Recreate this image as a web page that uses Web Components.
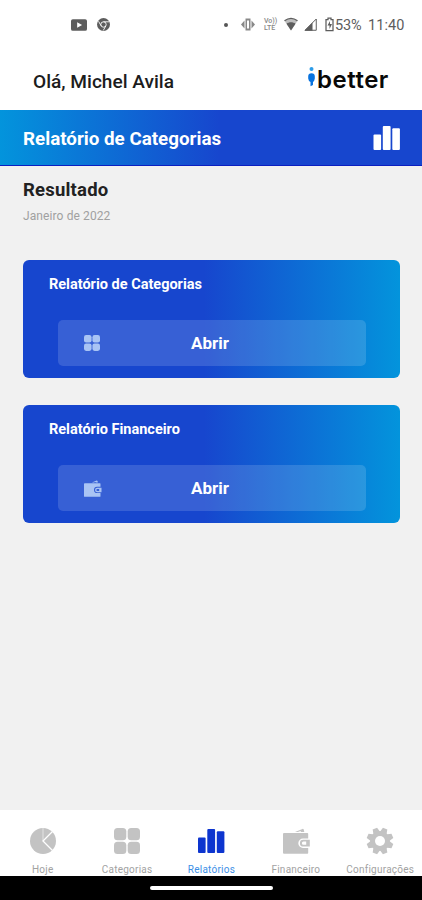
<!DOCTYPE html>
<html lang="pt-BR">
<head>
<meta charset="utf-8">
<title>ibetter</title>
<style>
  body {
    margin: 0;
    font-family: Roboto, "Liberation Sans", sans-serif;
    background: #f1f1f1;
  }
</style>
</head>
<body>
<better-app></better-app>

<script>
const ICONS = {
  bars: `<rect x="0" y="9.500" width="7.600" height="15.500" rx="1"/><rect x="9.300" y="1" width="7.800" height="24" rx="1"/><rect x="18.800" y="3.200" width="7.600" height="21.800" rx="1"/>`,
  grid: `<rect x="0" y="0" width="12.300" height="12.300" rx="3.500"/><rect x="13.700" y="0" width="12.300" height="12.300" rx="3.500"/><rect x="0" y="13.700" width="12.300" height="12.300" rx="3.500"/><rect x="13.700" y="13.700" width="12.300" height="12.300" rx="3.500"/>`,
  pie: `<circle cx="13" cy="13" r="13"/><path d="M22.500 3.500L13 13L22.500 22.500" fill="none" stroke="#fff" stroke-width="1.300"/><path d="M13 0V13" stroke="#fff" stroke-width="1" opacity=".55"/>`,
  wallet: `<path d="M12 4L19.400.9a1 1 0 0 1 1.300.6L21.300 4H18l-.5-1L15 4Z"/><path d="M1 5H24.400a.8.8 0 0 1 .8.800V10.500H20a4.700 4.700 0 0 0 0 9.400h5.200V25a.8.8 0 0 1-.8.8H1a1 1 0 0 1-1-1V6a1 1 0 0 1 1-1Z"/><path fill-rule="evenodd" d="M20.300 11.800H26.800V18.600H20.300a3.400 3.400 0 0 1 0-6.800ZM20.500 13.600a1.600 1.600 0 1 0 0 3.200h2.700v-3.200Z"/>`,
  gear: `<circle cx="13" cy="13" r="10"/>${[22.5, 67.5, 112.5, 157.5].map(a => `<path d="M10.600-.4h4.800l.9 4v18.800l-.9 4h-4.800l-.9-4V3.600Z" transform="rotate(${a} 13 13)"/>`).join("")}<circle cx="13" cy="13" r="5" fill="#fff"/>`,
  video: `<path fill-rule="evenodd" d="M3 3.500h20a3 3 0 0 1 3 3v13a3 3 0 0 1-3 3H3a3 3 0 0 1-3-3v-13a3 3 0 0 1 3-3ZM10 8.500v9l8-4.500Z"/>`,
  chrome: `<circle cx="13" cy="13" r="13"/><circle cx="13" cy="13" r="5.400" fill="none" stroke="#fff" stroke-width="1.800"/><path d="M13 7.600H24M8.300 15.700L3 6.500M17.700 15.700L12.500 25" stroke="#fff" stroke-width="1.800"/>`,
  vibrate: `<path d="M8 1h10v24H8Z"/><path d="M11 5h4v16h-4Z" fill="#fff"/><path d="M6 5L-1 13l7 8ZM20 5l7 8-7 8Z"/>`,
  wifi: `<path d="M0 5.500C7-.5 19-.5 26 5.500L13 25Z" opacity=".4"/><path d="M0 5.500C8-.5 18-.5 26 5.500" fill="none" stroke="currentColor" stroke-width="2.500"/><path d="M4 11.500C9 7.500 17 7.500 22 11.500L13 25Z"/>`,
  signal: `<path d="M2 24.500H24.500V2Z" fill="none" stroke="currentColor" stroke-width="2"/><path d="M1 25.500H17V9Z"/>`,
  battery: `<path d="M6 3h4V0h6v3h4v22H6Z" fill="none" stroke="currentColor" stroke-width="2.500"/><path d="M14 6l-5 9h4v7l5-10h-4Z"/>`
};

class AppIcon extends HTMLElement {
  constructor() {
    super();
    this.attachShadow({ mode: "open" });
  }

  connectedCallback() {
    this.shadowRoot.innerHTML = `
      <style>
        :host { display: block; width: 26px; height: 26px; flex: none; }
        svg { display: block; width: 100%; height: 100%; fill: currentColor; overflow: visible; }
      </style>
      <svg viewBox="0 0 26 26">${ICONS[this.getAttribute("name")]}</svg>`;
  }
}
customElements.define("app-icon", AppIcon);

class StatusBar extends HTMLElement {
  constructor() {
    super();
    this.attachShadow({ mode: "open" }).innerHTML = `
      <style>
        :host {
          display: flex;
          align-items: center;
          box-sizing: border-box;
          height: 49px;
          padding: 0 17px 0 71px;
          color: #5d5d5d;
          font-size: 14.5px;
        }
        app-icon { width: 13px; height: 13px; }
        .video { width: 16px; height: 16px; margin-right: 10px; }
        .dot { width: 4px; height: 4px; border-radius: 50%; background: #555; margin: 0 13px 0 auto; }
        .vibrate { width: 14px; color: #888; }
        .volte { font-size: 7px; line-height: 6.500px; font-weight: 500; margin: 0 6px 0 9px; width: 14px; color: #888; }
        .wifi { width: 14px; margin-right: 6px; }
        .signal { margin-right: 6px; }
        .battery { margin-right: -1px; }
        .level { width: 28px; margin-top: 1px; letter-spacing: -.1px; }
        .clock { width: 37px; margin: 1px 0 0 5px; letter-spacing: .1px; white-space: nowrap; }
      </style>
      <app-icon class="video" name="video"></app-icon>
      <app-icon name="chrome"></app-icon>
      <span class="dot"></span>
      <app-icon class="vibrate" name="vibrate"></app-icon>
      <span class="volte">Vo))<br>LTE</span>
      <app-icon class="wifi" name="wifi"></app-icon>
      <app-icon class="signal" name="signal"></app-icon>
      <app-icon class="battery" name="battery"></app-icon>
      <span class="level">53%</span>
      <span class="clock">11:40</span>`;
  }
}
customElements.define("status-bar", StatusBar);

class BrandLogo extends HTMLElement {
  constructor() {
    super();
    this.attachShadow({ mode: "open" }).innerHTML = `
      <style>
        :host { display: flex; align-items: flex-start; height: 30px; }
        svg { width: 7px; height: 20px; margin: 3px 2px 0 0; }
        span {
          font: 600 24px/30px Inter, sans-serif;
          letter-spacing: .5px;
          color: #080808;
          width: 73px;
          margin-top: 1px;
        }
      </style>
      <svg viewBox="0 0 7 20">
        <circle cx="3.500" cy="2" r="2" fill="#2c9ce8"/>
        <path d="M.2 9.500Q.2 6.200 3.500 6.200T6.800 9.500V11.500Q6.500 14 5 15V18L2.500 19.300V15Q.4 14 .2 11.500Z" fill="#0873df"/>
      </svg>
      <span>better</span>`;
  }
}
customElements.define("brand-logo", BrandLogo);

class AppHeader extends HTMLElement {
  constructor() {
    super();
    this.attachShadow({ mode: "open" }).innerHTML = `
      <style>
        :host {
          display: flex;
          justify-content: space-between;
          align-items: center;
          box-sizing: border-box;
          height: 61px;
          padding: 4px 32px 0 33px;
          color: #1c1c1c;
          font-size: 19.100px;
          font-weight: 500;
        }
        brand-logo { margin-top: -5px; }
      </style>
      <slot></slot>
      <brand-logo></brand-logo>`;
  }
}
customElements.define("app-header", AppHeader);

class PageBanner extends HTMLElement {
  constructor() {
    super();
    this.attachShadow({ mode: "open" }).innerHTML = `
      <style>
        :host {
          display: flex;
          justify-content: space-between;
          align-items: center;
          box-sizing: border-box;
          height: 56px;
          padding: 3px 22px 0 23px;
          border-bottom: 1px solid #0b1fc0;
          color: #fff;
          font-size: 18.800px;
          font-weight: 700;
          background: linear-gradient(90deg, #0394dc, #1746ce 52%);
        }
        app-icon { width: 27px; height: 26px; margin-top: -3px; }
      </style>
      <slot></slot>
      <app-icon name="bars"></app-icon>`;
  }
}
customElements.define("page-banner", PageBanner);

class ReportCard extends HTMLElement {
  constructor() {
    super();
    this.attachShadow({ mode: "open" });
  }

  connectedCallback() {
    this.shadowRoot.innerHTML = `
      <style>
        :host {
          display: block;
          box-sizing: border-box;
          height: 118px;
          padding: 16px 34px 0 35px;
          border-radius: 6px;
          color: #fff;
          background: linear-gradient(90deg, #1746ce 48%, #0394dc);
        }
        h3 { margin: 0 0 0 -9px; font-size: 14.500px; line-height: 18px; font-weight: 700; }
        button {
          display: grid;
          grid-template-columns: 36px 1fr 36px;
          align-items: center;
          width: 308px;
          height: 46px;
          margin: 26px 0 0;
          padding: 0 26px;
          border: 0;
          border-radius: 5px;
          color: inherit;
          font: 700 17px Roboto, sans-serif;
          background: rgba(255, 255, 255, .14);
        }
        app-icon { width: 16px; height: 16px; color: #a9c4f4; }
        :host([icon="wallet"]) app-icon { width: 17px; height: 17px; }
        span { padding-right: 4px; }
      </style>
      <h3><slot></slot></h3>
      <button><app-icon name="${this.getAttribute("icon")}"></app-icon><span>Abrir</span></button>`;
  }
}
customElements.define("report-card", ReportCard);

class NavItem extends HTMLElement {
  constructor() {
    super();
    this.attachShadow({ mode: "open" });
  }

  connectedCallback() {
    this.shadowRoot.innerHTML = `
      <style>
        :host {
          display: flex;
          flex-direction: column;
          align-items: center;
          color: #a2a2a2;
          font-size: 10px;
          line-height: 12px;
          letter-spacing: .25px;
          white-space: nowrap;
        }
        app-icon { margin-bottom: 10px; color: #c3c3c3; }
        :host([active]) { color: #3d8fe6; }
        :host([active]) app-icon { color: #0d35cf; }
      </style>
      <app-icon name="${this.getAttribute("icon")}"></app-icon>
      <slot></slot>`;
  }
}
customElements.define("nav-item", NavItem);

class TabBar extends HTMLElement {
  constructor() {
    super();
    this.attachShadow({ mode: "open" }).innerHTML = `
      <style>
        :host {
          display: grid;
          grid-template-columns: repeat(5, 84.400px);
          box-sizing: border-box;
          height: 66px;
          padding: 18px 0 0 .5px;
          background: #fff;
          overflow: hidden;
        }
      </style>
      <slot></slot>`;
  }
}
customElements.define("tab-bar", TabBar);

class BetterApp extends HTMLElement {
  constructor() {
    super();
    this.attachShadow({ mode: "open" }).innerHTML = `
      <style>
        :host { display: flex; flex-direction: column; height: 900px; overflow: hidden; }
        .top { background: #fff; }
        main { flex: 1; padding: 14px 22px 0 23px; }
        h2 { margin: 0; font-size: 18.500px; line-height: 20px; font-weight: 700; letter-spacing: .2px; color: #222; }
        p { margin: 8px 0 36px; font-size: 12px; line-height: 16px; letter-spacing: .1px; color: #a0a0a0; }
        report-card + report-card { margin-top: 27px; }
        .gesture { display: flex; justify-content: center; height: 24px; background: #000; }
        .gesture i { width: 123px; height: 4px; margin-top: 10px; border-radius: 2px; background: #fff; }
      </style>
      <div class="top">
        <status-bar></status-bar>
        <app-header>Olá, Michel Avila</app-header>
      </div>
      <page-banner>Relatório de Categorias</page-banner>
      <main>
        <h2>Resultado</h2>
        <p>Janeiro de 2022</p>
        <report-card icon="grid">Relatório de Categorias</report-card>
        <report-card icon="wallet">Relatório Financeiro</report-card>
      </main>
      <tab-bar>
        <nav-item icon="pie">Hoje</nav-item>
        <nav-item icon="grid">Categorias</nav-item>
        <nav-item icon="bars" active>Relatórios</nav-item>
        <nav-item icon="wallet">Financeiro</nav-item>
        <nav-item icon="gear">Configurações</nav-item>
      </tab-bar>
      <div class="gesture"><i></i></div>`;
  }
}
customElements.define("better-app", BetterApp);
</script>
</body>
</html>
